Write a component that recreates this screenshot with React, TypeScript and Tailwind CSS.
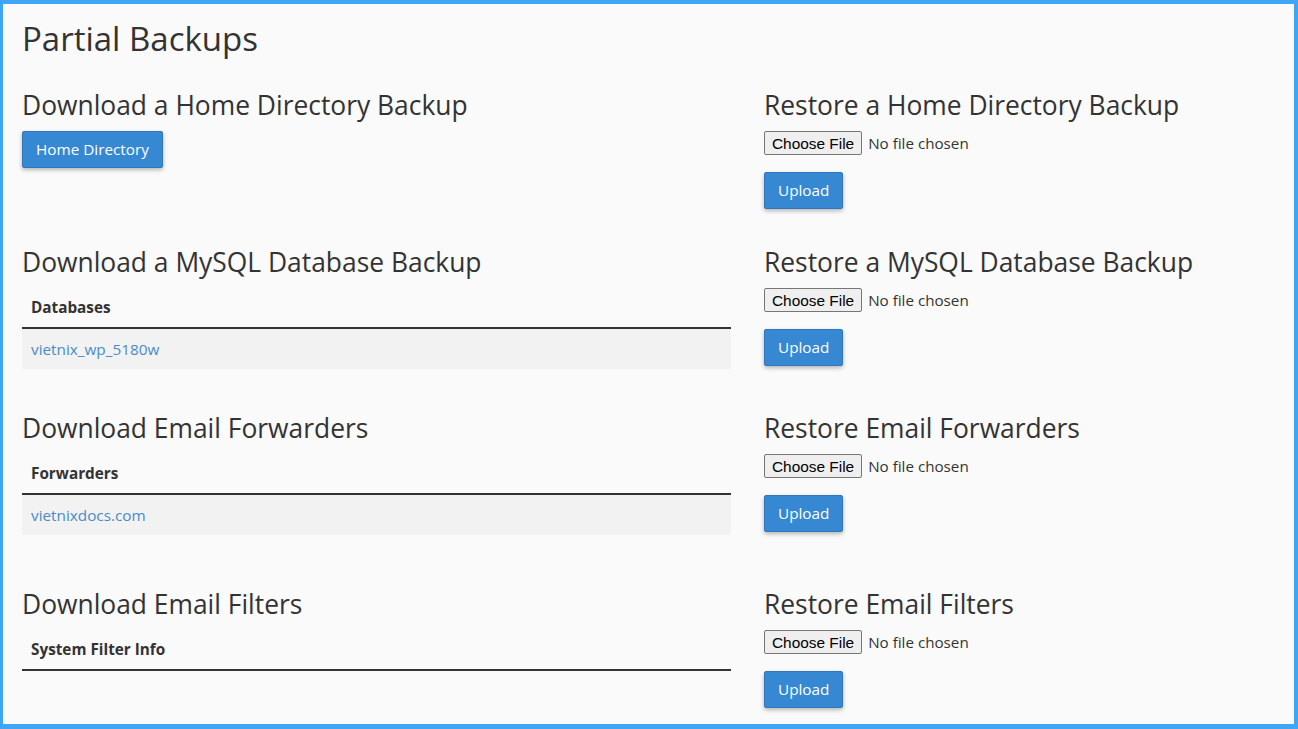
import React from 'react';

const heading = "text-[26.4px] leading-[1.1] font-normal text-[#333] mb-[11px]";

const PrimaryButton: React.FC<{ label: string }> = ({ label }) => (
  <button className="h-[37px] px-[13px] rounded-[2px] border border-[#2f78bd] bg-[#3688d2] text-white text-[15.3px] leading-none shadow-[0_2px_4px_rgba(0,0,0,0.28)]">
    {label}
  </button>
);

const FileRestore: React.FC = () => (
  <div>
    <div className="flex items-center h-[24px] mt-[1px]">
      <button className="h-[24px] px-[7px] rounded-[2px] border border-[#767676] bg-[#efefef] text-black text-[15.4px] leading-none font-['Liberation_Sans',Arial,sans-serif]">
        Choose File
      </button>
      <span className="ml-[6px] text-[15.2px] text-[#333]">No file chosen</span>
    </div>
    <div className="mt-[17px]">
      <PrimaryButton label="Upload" />
    </div>
  </div>
);

const BackupTable: React.FC<{ title: string; value?: string }> = ({ title, value }) => (
  <table className="w-full border-collapse text-[15.3px] mt-[-1px]">
    <thead>
      <tr>
        <th className="text-left font-bold px-[9px] py-[9px] leading-[22px] border-b-2 border-[#333] text-[#333]">{title}</th>
      </tr>
    </thead>
    {value && (
      <tbody>
        <tr className="bg-[#f2f2f2]">
          <td className="px-[9px] py-[9px] leading-[22px]">
            <a className="text-[#4a8bc9]">{value}</a>
          </td>
        </tr>
      </tbody>
    )}
  </table>
);

const Row: React.FC<{ className?: string; left: React.ReactNode; right: React.ReactNode }> = ({ className, left, right }) => (
  <div className={`grid grid-cols-[709px_1fr] gap-x-[33px] ${className ?? ''}`}>
    <div>{left}</div>
    <div>{right}</div>
  </div>
);

export default function App() {
  return (
    <div className="h-[729px] w-full overflow-hidden bg-[#fafafa] border-[#3ea6f5] border-t-[4px] border-l-[3px] border-r-[4px] border-b-[5px] font-['Open_Sans',sans-serif] text-[#333]">
      <div className="pl-[19px] pr-[18px] pt-[17px]">
        <h1 className="text-[33px] leading-[1.1] font-normal text-[#333]">Partial Backups</h1>

        <Row
          className="mt-[34px]"
          left={
            <>
              <h2 className={heading}>Download a Home Directory Backup</h2>
              <PrimaryButton label="Home Directory" />
            </>
          }
          right={
            <>
              <h2 className={heading}>Restore a Home Directory Backup</h2>
              <FileRestore />
            </>
          }
        />

        <Row
          className="mt-[39px]"
          left={
            <>
              <h2 className={heading}>Download a MySQL Database Backup</h2>
              <BackupTable title="Databases" value="vietnix_wp_5180w" />
            </>
          }
          right={
            <>
              <h2 className={heading}>Restore a MySQL Database Backup</h2>
              <FileRestore />
            </>
          }
        />

        <Row
          className="mt-[45px]"
          left={
            <>
              <h2 className={heading}>Download Email Forwarders</h2>
              <BackupTable title="Forwarders" value="vietnixdocs.com" />
            </>
          }
          right={
            <>
              <h2 className={heading}>Restore Email Forwarders</h2>
              <FileRestore />
            </>
          }
        />

        <Row
          className="mt-[55px]"
          left={
            <>
              <h2 className={heading}>Download Email Filters</h2>
              <BackupTable title="System Filter Info" />
            </>
          }
          right={
            <>
              <h2 className={heading}>Restore Email Filters</h2>
              <FileRestore />
            </>
          }
        />
      </div>
    </div>
  );
}
